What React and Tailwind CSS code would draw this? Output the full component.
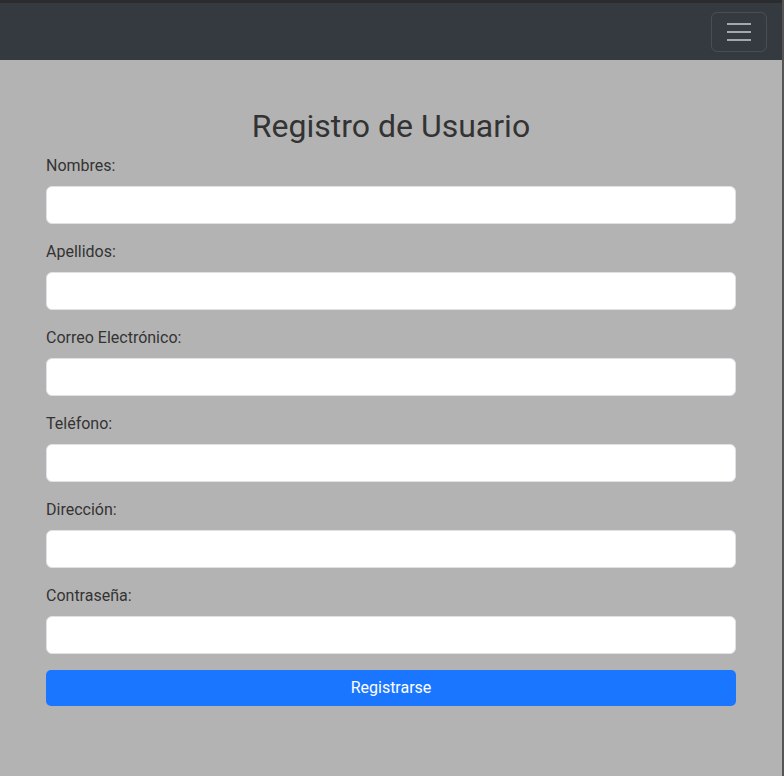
export default function App() {
  const fields = [
    "Nombres:",
    "Apellidos:",
    "Correo Electrónico:",
    "Teléfono:",
    "Dirección:",
    "Contraseña:",
  ];
  return (
    <div className="flex h-[776px] w-[784px] overflow-hidden" style={{ fontFamily: "Roboto, 'Liberation Sans', sans-serif" }}>
      <div className="flex h-full flex-1 flex-col bg-[#b3b3b3]">
        <div className="h-[3px] bg-[#2b2c2f]" />
        <nav className="flex h-[57px] items-center justify-end bg-[#343a40] pr-[15px]">
          <button className="flex h-[40px] w-[56px] flex-col items-center justify-center gap-[6px] rounded-[6px] border border-white/10">
            <span className="block h-[2px] w-[24px] bg-[#a5a8ab]" />
            <span className="block h-[2px] w-[24px] bg-[#a5a8ab]" />
            <span className="block h-[2px] w-[24px] bg-[#a5a8ab]" />
          </button>
        </nav>
        <main className="px-[46px] pt-[47px]">
          <h2 className="mb-[8px] text-center text-[32px] leading-[39px] font-normal text-[#333]">
            Registro de Usuario
          </h2>
          {fields.map((f) => (
            <div key={f} className="mb-[16px]">
              <label className="mb-[8px] block text-[16px] leading-[24px] text-[#333]">{f}</label>
              <input className="block h-[38px] w-full rounded-[6px] border border-[#dee2e6] bg-white px-3 outline-none" />
            </div>
          ))}
          <button className="flex h-[36px] w-full items-center justify-center rounded-[5px] bg-[#1b76ff] text-[16px] text-white">
            Registrarse
          </button>
        </main>
      </div>
      <div className="h-full w-[2px] bg-[#555]" />
    </div>
  );
}
